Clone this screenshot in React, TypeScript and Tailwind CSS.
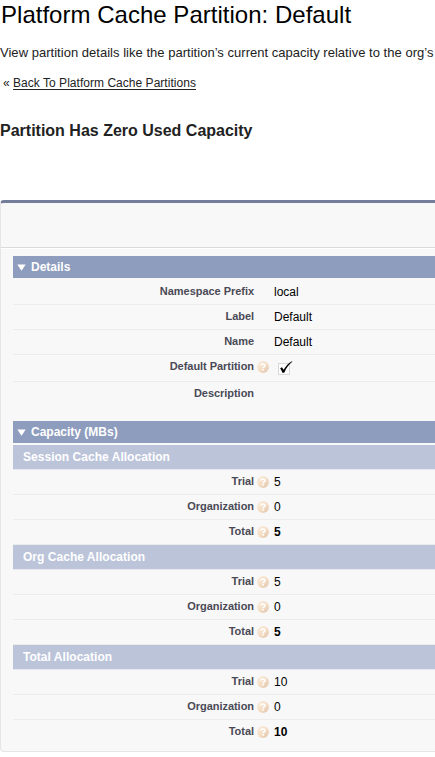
import type { ReactNode } from "react";

function Help() {
  return (
    <svg className="block h-3 w-3 shrink-0" viewBox="0 0 12 12">
      <defs>
        <linearGradient id="helpFill" x1="0" y1="0" x2="1" y2="1">
          <stop offset="0" stopColor="#fbeedd" />
          <stop offset="0.55" stopColor="#f3dcc3" />
          <stop offset="1" stopColor="#dfc3ac" />
        </linearGradient>
      </defs>
      <circle cx="6" cy="6" r="5.9" fill="url(#helpFill)" />
      <path d="M4 4.6C4.1 2.5 8 2.5 8 4.5C8 5.8 6.1 5.7 6.1 7.2" fill="none" stroke="#fff" strokeWidth="1.6" />
      <rect x="5.3" y="8" width="1.6" height="1.5" fill="#fff" />
    </svg>
  );
}

function Checked() {
  return (
    <svg className="ml-1 block h-4 w-4" viewBox="0 0 16 16">
      <rect x="0.5" y="3.5" width="11" height="11" fill="#fdfdfd" stroke="#b5b5b5" strokeDasharray="1 1" />
      <path d="M2.2 8.2L4 7.3L5.6 9.7C7.8 6 10.5 3.1 14 1.2L14.3 1.7C10.8 4.4 8.2 8 6.4 12.5L4.7 13Z" fill="#000" />
    </svg>
  );
}

type RowProps = { label: string; value?: ReactNode; help?: boolean; bold?: boolean; tall?: boolean; last?: boolean };

function Row({ label, value, help, bold, tall, last }: RowProps) {
  return (
    <div className={`flex items-start border-b ${last ? "border-transparent" : "border-[#ececec]"} ${tall ? "h-[27px]" : "h-[25px]"}`}>
      <div className="w-[241px] shrink-0 pt-1 text-right text-[11px] leading-[14px] font-bold tracking-[-0.04px] text-[#4a4a56]">{label}</div>
      <div className="flex w-5 shrink-0 pt-[6px] pl-[3px]">{help && <Help />}</div>
      <div className={`pt-[5px] text-[12px] leading-[15px] text-black ${bold ? "font-bold" : ""}`}>{value}</div>
    </div>
  );
}

function SectionBar({ title }: { title: string }) {
  return (
    <div className="flex h-[22px] items-center bg-[#8e9dbe] pl-1 text-[12px] font-bold text-white">
      <svg className="mr-[5px] h-[7px] w-[9px]" viewBox="0 0 9 7">
        <path d="M0.3 0.5H8.7L4.5 6.7Z" fill="#fff" />
      </svg>
      {title}
    </div>
  );
}

function Allocation({ title, amount }: { title: string; amount: string }) {
  return (
    <div>
      <div className="h-[25px] border-b border-[#e6e8ee] bg-[#bcc4da] bg-clip-padding pl-[10px] text-[12px] leading-6 font-bold tracking-[0.03px] text-white">{title}</div>
      <Row label="Trial" value={amount} help />
      <Row label="Organization" value="0" help />
      <Row label="Total" value={amount} help bold last={title === "Total Allocation"} />
    </div>
  );
}

export default function App() {
  return (
    <div className="h-[757px] w-[435px] overflow-hidden bg-white font-['Liberation_Sans',Arial,sans-serif] whitespace-nowrap text-[#222]">
      <h1 className="pt-px pl-px text-[24px] leading-7 tracking-[0.02px] text-black">Platform Cache Partition: Default</h1>
      <p className="mt-4 text-[13px] leading-4 tracking-[0.025px]">View partition details like the partition’s current capacity relative to the org’s</p>
      <p className="mt-[14px] pl-[3px] text-[12px] leading-4 tracking-[0.03px]">
        « <a className="underline underline-offset-2">Back To Platform Cache Partitions</a>
      </p>
      <h2 className="mt-[30px] text-[16px] leading-5 font-bold">Partition Has Zero Used Capacity</h2>
      <div className="mt-[59px] h-[552px] w-[450px] rounded-[4px] border border-t-[3px] border-[#e6e6e6] border-t-[#747e9a] bg-[#f8f8f8]">
        <div className="h-[45px] border-b border-[#dbdbdb]" />
        <div className="border-t border-white pt-[7px] pl-3">
          <SectionBar title="Details" />
          <div className="pt-[2px]">
            <Row label="Namespace Prefix" value="local" />
            <Row label="Label" value="Default" />
            <Row label="Name" value="Default" />
            <Row label="Default Partition" value={<Checked />} help tall />
            <Row label="Description" last />
          </div>
          <div className="mt-[14px]">
            <SectionBar title="Capacity (MBs)" />
          </div>
          <div className="mt-[2px]">
            <Allocation title="Session Cache Allocation" amount="5" />
            <Allocation title="Org Cache Allocation" amount="5" />
            <Allocation title="Total Allocation" amount="10" />
          </div>
        </div>
      </div>
    </div>
  );
}
